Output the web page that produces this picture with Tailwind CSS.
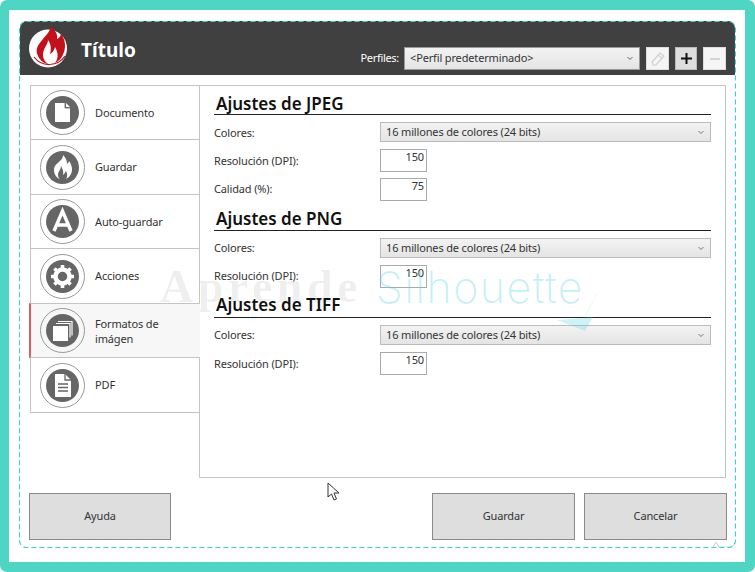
<!DOCTYPE html>
<html lang="es">
<head>
<meta charset="utf-8">
<script src="https://cdn.jsdelivr.net/npm/@tailwindcss/browser@4"></script>
</head>
<body class="w-[755px] h-[572px] overflow-hidden bg-white font-['Noto_Sans','Open_Sans',sans-serif] text-[#333] tracking-[-0.15px]">
<div class="w-[755px] h-[572px] bg-[#4fd5c3] rounded-[7px] pt-[10px]">
<div class="ml-[9px] mr-[10px] h-[552px] bg-white pl-[10px] pr-[9px] pt-[11px] relative">
  <div class="h-[527px] w-[717px] border border-transparent rounded-[7px] relative">
    <!-- header -->
    <header class="h-[54px] -mt-px bg-[#404040] rounded-t-[7px] flex items-center pl-[8px] pr-[9px]">
      <svg class="w-[42px] h-[42px] shrink-0 -mt-[2px]" viewBox="0 0 42 42">
        <circle cx="20" cy="22.500" r="19" fill="#fff"/>
        <path d="M6 31a19 19 0 0 0 31-1" fill="none" stroke="#c4101a" stroke-width="1.200"/>
        <path d="M10 30C6 22 12 17 15 13 17 10 21 7 23 1 27 4 30 8 29 13 31 12 32 11 33 8 37 13 38 20 36 26 34 32 31 35 27 37 31 32 30 26 27 21 26 25 24 27 22 28 24 22 22 16 20 14 20 19 15 22 15 29 15 33 17 36 20 38 15 37 12 34 10 30z" fill="#c4101a"/>
      </svg>
      <h1 class="ml-[11px] mt-[5px] text-[19px] font-bold text-white leading-none tracking-normal">Título</h1>
      <div class="ml-auto flex items-center self-start mt-[26px] h-[23px]">
        <span class="text-[11px] text-white mr-[5px] tracking-[-0.3px]">Perfiles:</span>
        <div class="w-[236px] h-[23px] border border-[#999] bg-gradient-to-b from-[#f3f3f3] to-[#e4e4e4] flex items-center pl-[5px] pr-[6px] text-[11px] text-[#333]">
          <span>&lt;Perfil predeterminado&gt;</span>
          <svg class="ml-auto w-[6px] h-[5px]" viewBox="0 0 6 5"><path d="M.5 1l2.500 2.500L5.500 1" fill="none" stroke="#666"/></svg>
        </div>
        <div class="ml-[6px] w-[23px] h-[23px] bg-[#f5f5f5] border border-[#ddd] flex items-center justify-center">
          <svg class="w-[18px] h-[18px]" viewBox="0 0 18 18"><path d="M3 12l8-9 4 3-8 9H4zM9 5l4 3" fill="none" stroke="#d0d0d0" stroke-width="1.200"/></svg>
        </div>
        <div class="ml-[6px] w-[22px] h-[23px] bg-[#dedede] border border-[#bbb] flex items-center justify-center">
          <svg class="w-[11px] h-[11px]" viewBox="0 0 11 11"><path d="M5.500 0v11M0 5.500h11" stroke="#111" stroke-width="2"/></svg>
        </div>
        <div class="ml-[6px] w-[23px] h-[23px] bg-[#f5f5f5] border border-[#ddd] flex items-center justify-center">
          <div class="w-[10px] h-[2px] bg-[#d4d4d4]"></div>
        </div>
      </div>
    </header>

    <!-- main -->
    <div class="flex mt-[10px] ml-[10px] mr-[9px] h-[393px] relative">
      <nav class="w-[170px] shrink-0 text-[11px] relative z-10 -mr-px">
        <div class="h-[55px] border border-[#c4c4c4] flex items-center pl-[9px]">
          <div class="w-[45px] h-[45px] rounded-full border border-[#999] flex items-center justify-center shrink-0">
            <svg class="w-[33px] h-[33px]" viewBox="0 0 33 33"><circle cx="16.500" cy="16.500" r="16.500" fill="#666"/><path d="M9 7h10l5 5v14H9z" fill="#fff"/><path d="M19 7v5h5" fill="#666" stroke="#666" stroke-width=".8"/><path d="M20 7l4 4h-4z" fill="#fff"/></svg>
          </div>
          <span class="ml-[10px] pt-[2px]">Documento</span>
        </div>
        <div class="h-[56px] -mt-px border border-[#c4c4c4] flex items-center pl-[9px]">
          <div class="w-[45px] h-[45px] rounded-full border border-[#999] flex items-center justify-center shrink-0">
            <svg class="w-[33px] h-[33px]" viewBox="0 0 33 33"><circle cx="16.500" cy="16.500" r="16.500" fill="#666"/><path d="M8 19C8 14 12 12 15 9 16 8 17 6 17 4 20 7 21 10 21 13 22 12 23 11 23 10 26 14 27 19 25 23 24 25 22 27 20 28 22 25 21 22 20 20 19 22 18 23 17 24 18 20 16 17 15 15 15 19 12 20 12 24 12 26 13 27 14 28 11 27 8 24 8 19z" fill="#fff"/></svg>
          </div>
          <span class="ml-[10px]">Guardar</span>
        </div>
        <div class="h-[55px] -mt-px border border-[#c4c4c4] flex items-center pl-[9px]">
          <div class="w-[45px] h-[45px] rounded-full border border-[#999] flex items-center justify-center shrink-0">
            <svg class="w-[33px] h-[33px]" viewBox="0 0 33 33"><circle cx="16.500" cy="16.500" r="16.500" fill="#666"/><path d="M8 26l8.500-20L25 26M11 20h11" fill="none" stroke="#fff" stroke-width="3.400"/></svg>
          </div>
          <span class="ml-[10px] pt-[2px]">Auto-guardar</span>
        </div>
        <div class="h-[56px] -mt-px border border-[#c4c4c4] flex items-center pl-[9px]">
          <div class="w-[45px] h-[45px] rounded-full border border-[#999] flex items-center justify-center shrink-0">
            <svg class="w-[33px] h-[33px]" viewBox="0 0 33 33"><circle cx="16.500" cy="16.500" r="16.500" fill="#666"/><circle cx="16.500" cy="16.500" r="7" fill="none" stroke="#fff" stroke-width="4.500"/><path d="M16.500 5v23M5 16.500h23M8.400 8.400l16.200 16.200M24.600 8.400L8.400 24.600" stroke="#fff" stroke-width="3.600" stroke-dasharray="4 15"/></svg>
          </div>
          <span class="ml-[10px]">Acciones</span>
        </div>
        <div class="h-[55px] -mt-px -ml-[1px] w-[171px] bg-[#f7f7f7] border-l-2 border-l-[#d9605f] border-y border-y-[#c4c4c4] flex items-center pl-[9px] relative z-10">
          <div class="w-[45px] h-[45px] rounded-full border border-[#999] flex items-center justify-center shrink-0">
            <svg class="w-[33px] h-[33px]" viewBox="0 0 33 33"><circle cx="16.500" cy="16.500" r="16.500" fill="#666"/><path d="M12 7.500h14v14" fill="none" stroke="#fff" stroke-width="1.200"/><path d="M10 9.500h14v14" fill="none" stroke="#fff" stroke-width="1.200"/><rect x="7" y="12" width="15" height="15" fill="#fff"/></svg>
          </div>
          <span class="ml-[10px] leading-[15px]">Formatos de<br>imágen</span>
        </div>
        <div class="h-[56px] -mt-px border border-[#c4c4c4] flex items-center pl-[9px]">
          <div class="w-[45px] h-[45px] rounded-full border border-[#999] flex items-center justify-center shrink-0">
            <svg class="w-[33px] h-[33px]" viewBox="0 0 33 33"><circle cx="16.500" cy="16.500" r="16.500" fill="#666"/><path d="M9 5h10l6 6v17H9z" fill="#fff"/><path d="M19 5v6h6M12 15h10M12 18.500h10M12 22h10" fill="none" stroke="#666" stroke-width="1.300"/></svg>
          </div>
          <span class="ml-[10px]">PDF</span>
        </div>
      </nav>

      <section class="flex-1 border border-[#c4c4c4] pl-[14px] pr-[14px] text-[11px]">
        <h2 class="h-[29px] border-b border-[#222] text-[17px] font-semibold text-[#111] pl-[2px] leading-[36px] tracking-normal">Ajustes de JPEG</h2>
        <div class="flex items-center h-[20px] mt-[7px]">
          <span class="w-[166px] pt-[2px]">Colores:</span>
          <div class="flex-1 h-[20px] border border-[#bbb] bg-gradient-to-b from-[#f3f3f3] to-[#e4e4e4] flex items-center pl-[5px] pr-[6px]"><span>16 millones de colores (24 bits)</span><svg class="ml-auto w-[6px] h-[5px]" viewBox="0 0 6 5"><path d="M.5 1l2.500 2.500L5.500 1" fill="none" stroke="#777"/></svg></div>
        </div>
        <div class="flex items-center h-[23px] mt-[7px]">
          <span class="w-[166px] pt-[2px]">Resolución (DPI):</span>
          <div class="w-[47px] h-[23px] border border-[#aaa] text-right pr-[2px] leading-[14px]">150</div>
        </div>
        <div class="flex items-center h-[23px] mt-[6px]">
          <span class="w-[166px]">Calidad (%):</span>
          <div class="w-[47px] h-[23px] border border-[#aaa] text-right pr-[2px] leading-[14px]">75</div>
        </div>
        <h2 class="h-[30px] border-b border-[#222] text-[17px] font-semibold text-[#111] pl-[2px] leading-[36px] tracking-normal">Ajustes de PNG</h2>
        <div class="flex items-center h-[20px] mt-[7px]">
          <span class="w-[166px]">Colores:</span>
          <div class="flex-1 h-[20px] border border-[#bbb] bg-gradient-to-b from-[#f3f3f3] to-[#e4e4e4] flex items-center pl-[5px] pr-[6px]"><span>16 millones de colores (24 bits)</span><svg class="ml-auto w-[6px] h-[5px]" viewBox="0 0 6 5"><path d="M.5 1l2.500 2.500L5.500 1" fill="none" stroke="#777"/></svg></div>
        </div>
        <div class="flex items-center h-[23px] mt-[7px]">
          <span class="w-[166px]">Resolución (DPI):</span>
          <div class="w-[47px] h-[23px] border border-[#aaa] text-right pr-[2px] leading-[14px]">150</div>
        </div>
        <h2 class="h-[30px] border-b border-[#222] text-[17px] font-semibold text-[#111] pl-[2px] leading-[34px] tracking-normal">Ajustes de TIFF</h2>
        <div class="flex items-center h-[20px] mt-[7px]">
          <span class="w-[166px]">Colores:</span>
          <div class="flex-1 h-[20px] border border-[#bbb] bg-gradient-to-b from-[#f3f3f3] to-[#e4e4e4] flex items-center pl-[5px] pr-[6px]"><span>16 millones de colores (24 bits)</span><svg class="ml-auto w-[6px] h-[5px]" viewBox="0 0 6 5"><path d="M.5 1l2.500 2.500L5.500 1" fill="none" stroke="#777"/></svg></div>
        </div>
        <div class="flex items-center h-[23px] mt-[7px]">
          <span class="w-[166px] pt-[2px]">Resolución (DPI):</span>
          <div class="w-[47px] h-[23px] border border-[#aaa] text-right pr-[2px] leading-[14px]">150</div>
        </div>
      </section>
    </div>

    <!-- footer buttons -->
    <div class="flex mt-[15px] ml-[9px] mr-[8px] text-[11px]">
      <button class="w-[142px] h-[47px] bg-[#dedede] border border-[#8a8a8a]">Ayuda</button>
      <button class="ml-auto w-[143px] h-[47px] bg-[#dedede] border border-[#8a8a8a]">Guardar</button>
      <button class="ml-[9px] w-[143px] h-[47px] bg-[#dedede] border border-[#8a8a8a]">Cancelar</button>
    </div>

    <!-- resize grip -->
    <svg class="absolute right-0 bottom-0 w-[22px] h-[7px]" viewBox="0 0 22 7"><path d="M0 7l3-5 3 5h12l3-2" fill="none" stroke="#cfcfcf"/></svg>
    <!-- dashed selection outline -->
    <svg class="absolute -left-px -top-px w-[717px] h-[527px] pointer-events-none z-20" viewBox="0 0 717 527"><rect x=".5" y=".5" width="716" height="526" rx="7" fill="none" stroke="#3fd3bf" stroke-width="1.200" stroke-dasharray="5 3"/></svg>
  </div>

  <!-- watermark -->
  <div class="absolute left-[151px] top-[254px] h-[46px] flex items-center pointer-events-none whitespace-nowrap">
    <span class="font-['Liberation_Serif',serif] font-bold text-[46px] text-black/[0.07] leading-none tracking-[4.500px]">Aprende</span>
    <span class="ml-[14px] font-['Inter',sans-serif] font-extralight text-[43px] text-[#4fd5e0]/35 leading-none tracking-[1.500px]">Silhouette</span>
  </div>
  <svg class="absolute left-[540px] top-[280px] w-[50px] h-[50px] pointer-events-none" viewBox="0 0 50 50"><path d="M8 30l36-3-8 14z" fill="#4fd5e0" fill-opacity=".28"/><path d="M36 26L48 4" stroke="#4fd5e0" stroke-opacity=".15"/></svg>

  <!-- cursor -->
  <svg class="absolute left-[318px] top-[472px] w-[13px] h-[19px]" viewBox="0 0 13 19"><path d="M1 1v14l3.500-3 2.500 6 2.500-1-2.500-6h5z" fill="#fff" stroke="#333"/></svg>
</div>
</div>
</body>
</html>
